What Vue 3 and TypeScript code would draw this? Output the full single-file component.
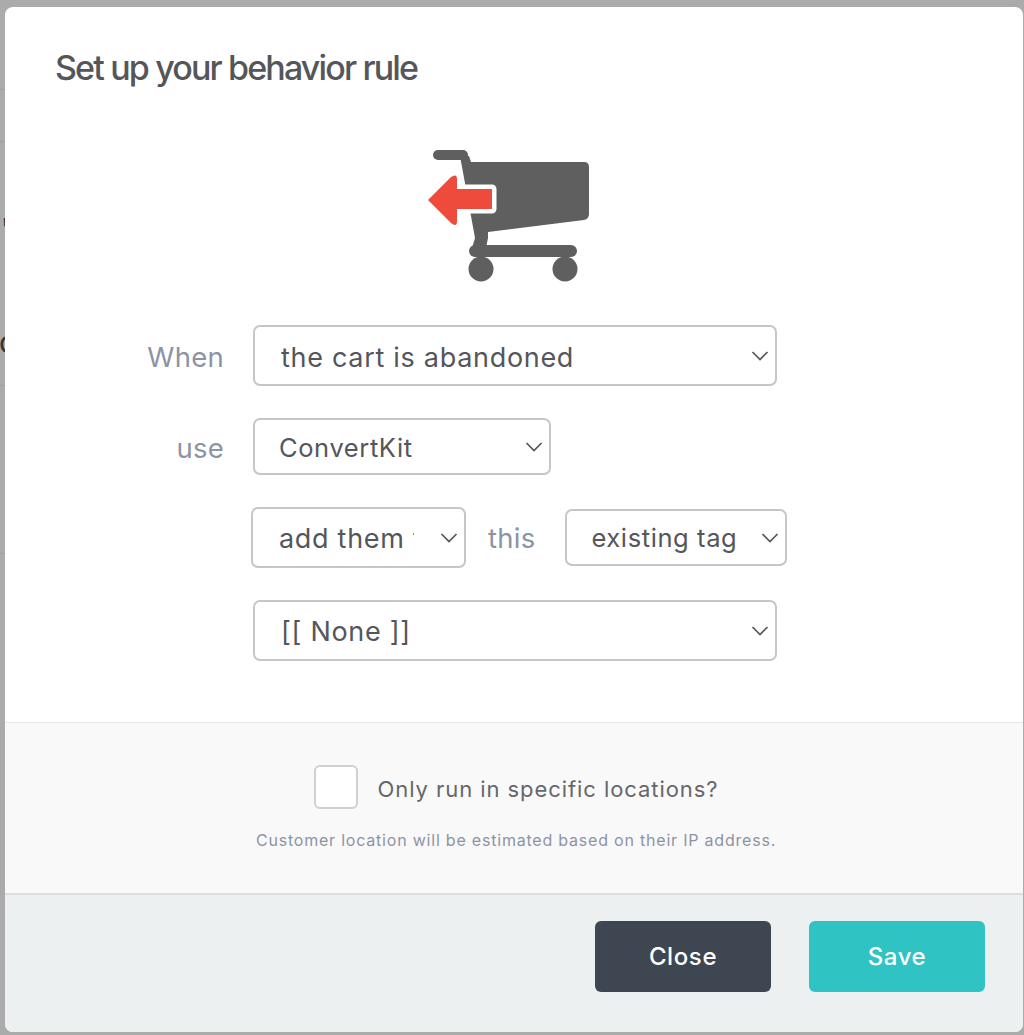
<script setup lang="ts">
import { ref } from 'vue'

// 背景に透けて見える部分
const backdropLines = [89, 141, 385, 553]

const trigger = ref('abandoned')
const service = ref('convertkit')
const action = ref('add')
const tagType = ref('existing')
const tag = ref('none')
const onlyLocations = ref(false)
</script>

<template>
  <div class="page">
    <div
      v-for="y in backdropLines"
      :key="y"
      class="backdrop-line"
      :style="{ top: y + 'px' }"
    ></div>
    <span class="backdrop-char char-n">n'</span>
    <span class="backdrop-char char-c">c</span>

    <div class="modal">
      <div class="body">
        <h1 class="title">Set up your behavior rule</h1>

        <div class="icon-row">
          <svg class="cart" width="170" height="140" viewBox="24 15 170 140">
            <rect x="33" y="20" width="35" height="10" rx="5" fill="#5f5f5f" />
            <path
              d="M60 26 L69 26 L71 32 L184 32 Q189 32 189 37 L189 84 Q189 89 184 90 L88 102 L88 108 L86 118 L72 118 L75 108 Z"
              fill="#5f5f5f"
            />
            <rect x="69" y="115" width="108" height="12" rx="6" fill="#5f5f5f" />
            <circle cx="81" cy="139" r="12.5" fill="#5f5f5f" />
            <circle cx="165" cy="139" r="12.5" fill="#5f5f5f" />
            <path
              d="M28 70 L51 47 Q57 43 57 49 L57 59 L92 59 L92 79 L57 79 L57 91 Q57 98 51 93 Z"
              fill="#ef4b3d"
              stroke="#ffffff"
              stroke-width="9"
              stroke-linejoin="round"
              paint-order="stroke"
            />
          </svg>
        </div>

        <div class="form">
          <div class="row row-trigger">
            <label class="label">When</label>
            <div class="select-wrap w-full tall">
              <select v-model="trigger">
                <option value="abandoned">the cart is abandoned</option>
                <option value="purchased">a purchase is made</option>
              </select>
              <svg class="chevron" width="18" height="10" viewBox="0 0 18 10"><path d="M1.5 1 L9 8.5 L16.5 1" /></svg>
            </div>
          </div>

          <div class="row row-service">
            <label class="label">use</label>
            <div class="select-wrap w-service short">
              <select v-model="service">
                <option value="convertkit">ConvertKit</option>
                <option value="mailchimp">Mailchimp</option>
              </select>
              <svg class="chevron" width="18" height="10" viewBox="0 0 18 10"><path d="M1.5 1 L9 8.5 L16.5 1" /></svg>
            </div>
          </div>

          <div class="row row-action">
            <div class="select-wrap w-action tall">
              <select v-model="action">
                <option value="add">add them to</option>
                <option value="remove">remove them from</option>
              </select>
              <svg class="chevron" width="18" height="10" viewBox="0 0 18 10"><path d="M1.5 1 L9 8.5 L16.5 1" /></svg>
            </div>
            <span class="label this">this</span>
            <div class="select-wrap w-type short">
              <select v-model="tagType">
                <option value="existing">existing tag</option>
                <option value="new">new tag</option>
              </select>
              <svg class="chevron" width="18" height="10" viewBox="0 0 18 10"><path d="M1.5 1 L9 8.5 L16.5 1" /></svg>
            </div>
          </div>

          <div class="row row-tag">
            <div class="select-wrap w-full tall">
              <select v-model="tag">
                <option value="none">[[ None ]]</option>
              </select>
              <svg class="chevron" width="18" height="10" viewBox="0 0 18 10"><path d="M1.5 1 L9 8.5 L16.5 1" /></svg>
            </div>
          </div>
        </div>
      </div>

      <div class="location">
        <label class="check-row">
          <input v-model="onlyLocations" type="checkbox" class="check" />
          <span class="check-text">Only run in specific locations?</span>
        </label>
        <p class="hint">Customer location will be estimated based on their IP address.</p>
      </div>

      <div class="footer">
        <button class="btn btn-close" type="button">Close</button>
        <button class="btn btn-save" type="button">Save</button>
      </div>
    </div>
  </div>
</template>

<style>
html,
body {
  margin: 0;
  background: #ababab;
}
</style>

<style scoped>
.page {
  position: relative;
  height: 1035px;
  overflow: hidden;
  background: #ababab;
  padding: 7px 1px 3px 5px;
  box-sizing: border-box;
  font-family: Inter, "Liberation Sans", sans-serif;
}
.backdrop-line {
  position: absolute;
  left: 0;
  width: 5px;
  height: 1px;
  background: #a0a0a0;
}
.backdrop-char {
  position: absolute;
  font-size: 30px;
  line-height: 30px;
  color: #333;
}
.char-n {
  left: -17px;
  top: 214px;
}
.char-c {
  left: -1px;
  top: 327px;
}
.modal {
  position: relative;
  height: 1025px;
  background: #fff;
  border-radius: 8px;
  overflow: hidden;
  display: flex;
  flex-direction: column;
}
.body {
  height: 716px;
  flex: none;
  box-sizing: border-box;
  padding: 40px 0 0;
  border-bottom: 1px solid #e8e8e8;
}
.title {
  margin: 0 0 0 50px;
  font-size: 34px;
  line-height: 42px;
  font-weight: 500;
  letter-spacing: -1.85px;
  color: #55565a;
}
.icon-row {
  display: flex;
  justify-content: center;
  padding-right: 10px;
  margin-top: 56px;
}
.cart {
  display: block;
}
.form {
  margin-top: 40px;
}
.row {
  display: flex;
  align-items: center;
}
.label {
  color: #8d93a5;
  font-size: 27.5px;
  letter-spacing: 0.25px;
  padding-top: 2px;
}
.row-trigger .label,
.row-service .label {
  width: 219px;
  margin-right: 29px;
  text-align: right;
}
.row-service {
  margin-top: 32px;
}
.row-action {
  margin: 32px 0 0 246px;
}
.this {
  margin: 0 30px 0 22px;
  padding-top: 0;
}
.row-tag {
  margin: 32px 0 0 248px;
}
.select-wrap {
  position: relative;
  flex: none;
}
.tall {
  height: 61px;
}
.short {
  height: 57px;
}
.w-full {
  width: 524px;
}
.w-service {
  width: 298px;
}
.w-action {
  width: 215px;
}
.w-type {
  width: 222px;
}
.select-wrap select {
  appearance: none;
  width: 100%;
  height: 100%;
  box-sizing: border-box;
  border: 2px solid #c6c6c6;
  border-radius: 7px;
  background: #fff;
  padding: 3px 48px 0 26px;
  font-family: Inter, "Liberation Sans", sans-serif;
  font-size: 27px;
  letter-spacing: 0.7px;
  color: #55565c;
}
.short select {
  font-size: 25.5px;
  letter-spacing: 0.6px;
  padding: 2px 40px 0 24px;
}
.row-action select,
.row-tag select {
  padding-top: 1px;
}
.row-action .short select {
  padding-top: 0;
}
.row-action .w-action select {
  padding-right: 50px;
}
.chevron {
  position: absolute;
  right: 8px;
  top: 50%;
  margin-top: -5px;
  pointer-events: none;
}
.chevron path {
  fill: none;
  stroke: #55565c;
  stroke-width: 1.7;
}
.location {
  flex: 1;
  background: #f9f9f9;
  border-bottom: 2px solid #dfdfdf;
  display: flex;
  flex-direction: column;
  align-items: center;
  padding: 42px 0 0 4px;
}
.check-row {
  display: flex;
  align-items: center;
  gap: 20px;
}
.check {
  appearance: none;
  width: 44px;
  height: 44px;
  margin: 0;
  background: #fff;
  border: 2px solid #d0d0d0;
  border-radius: 6px;
}
.check-text {
  font-size: 22px;
  letter-spacing: 0.93px;
  padding-top: 4px;
  color: #66676b;
}
.hint {
  margin: 21px 0 0;
  font-size: 16px;
  letter-spacing: 0.79px;
  color: #8d93a5;
}
.footer {
  height: 137px;
  flex: none;
  box-sizing: border-box;
  background: #ecf0f1;
  display: flex;
  justify-content: flex-end;
  gap: 38px;
  padding: 26px 38px 0 0;
}
.btn {
  width: 176px;
  height: 71px;
  border: none;
  border-radius: 6px;
  color: #fff;
  font-family: Inter, "Liberation Sans", sans-serif;
  font-size: 24px;
  font-weight: 500;
  letter-spacing: 0.6px;
}
.btn-close {
  background: #3e4651;
}
.btn-save {
  background: #2fc3c3;
}
</style>
